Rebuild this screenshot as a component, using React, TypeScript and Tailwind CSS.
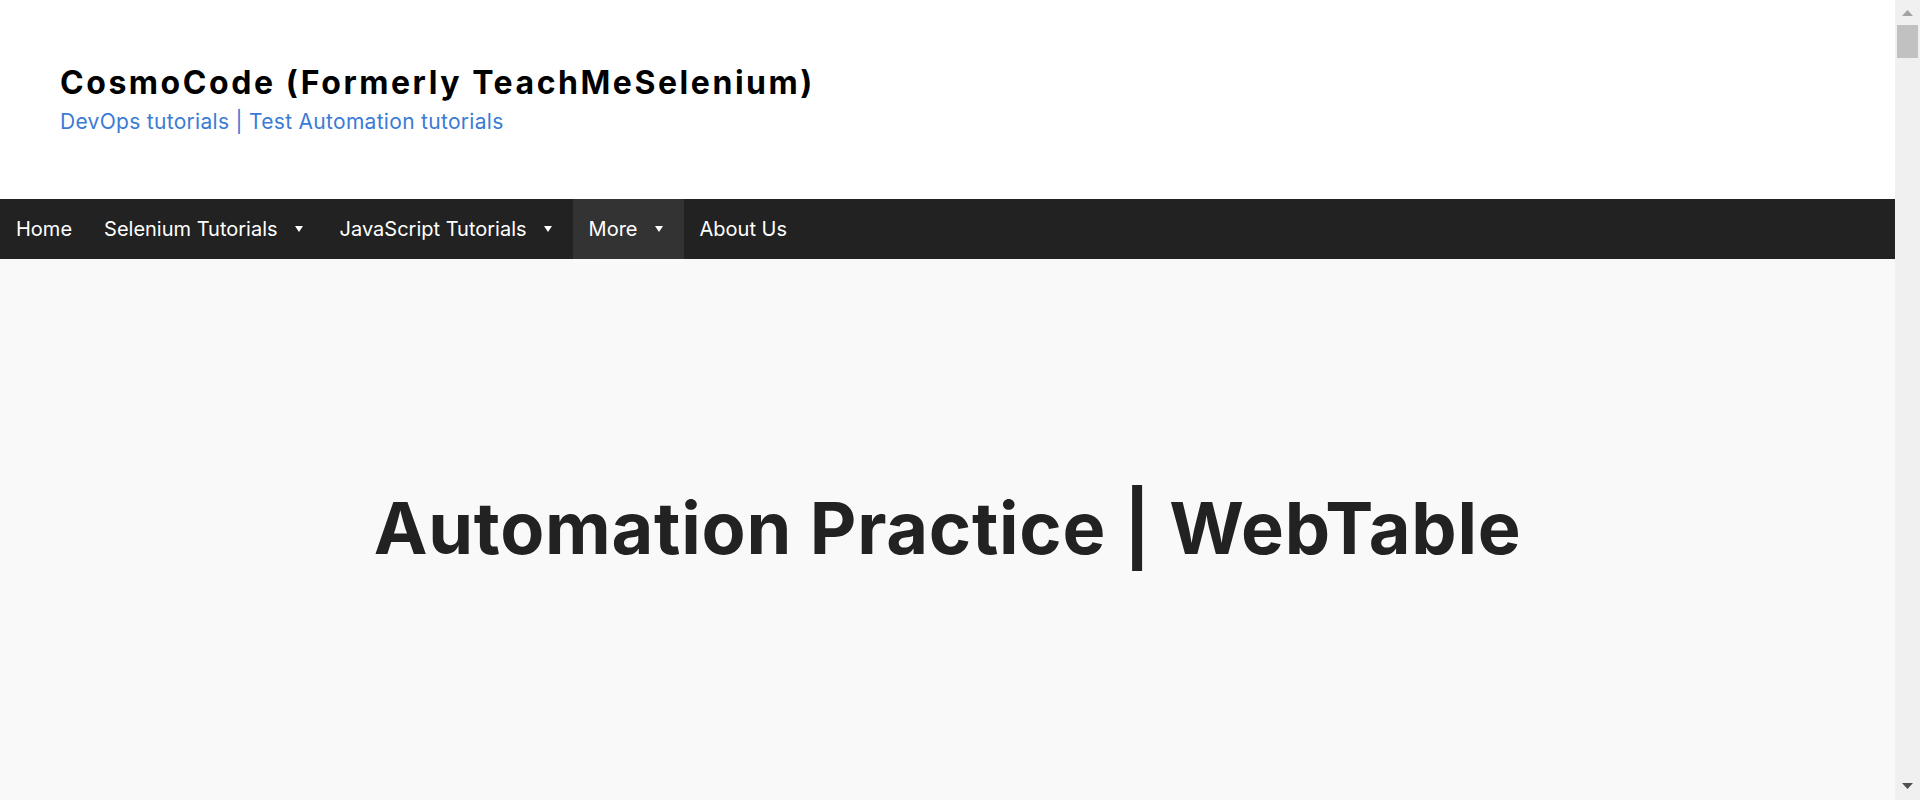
import React from "react";

function Caret() {
  return (
    <svg width="8" height="6" viewBox="0 0 8 6" className="ml-[17px] mr-[21px] shrink-0">
      <path d="M0 0 H8 L4 6 Z" fill="currentColor" />
    </svg>
  );
}

export default function App() {
  return (
    <div className="flex h-[800px] w-full overflow-hidden font-['Inter',sans-serif]">
      <div className="flex min-w-0 flex-1 flex-col">
        <header className="h-[199px] bg-white pl-[60px] pt-[63px]">
          <div className="text-[32px] font-bold leading-[40px] tracking-[2.55px] text-black">
            CosmoCode (Formerly TeachMeSelenium)
          </div>
          <div className="mt-[5px] text-[21px] leading-[28px] tracking-[0.3px] text-[#3a7bd5]">
            DevOps tutorials | Test Automation tutorials
          </div>
        </header>
        <nav className="flex h-[60px] bg-[#222222] text-[20px] leading-[24px] text-white">
          <a className="flex items-center px-4">Home</a>
          <a className="flex items-center pl-4">
            Selenium Tutorials
            <Caret />
          </a>
          <a className="flex items-center pl-4">
            JavaScript Tutorials
            <Caret />
          </a>
          <a className="flex items-center bg-[#333333] pl-4">
            More
            <Caret />
          </a>
          <a className="flex items-center px-4">About Us</a>
        </nav>
        <main className="flex-1 bg-[#f9f9f9]">
          <h1 className="mt-[233px] text-center text-[72px] font-bold leading-none tracking-[0.75px] text-[#222222]">
            Automation Practice | WebTable
          </h1>
        </main>
      </div>
      <div className="flex w-[25px] shrink-0 flex-col bg-[#f0f0f0]">
        <div className="flex h-[25px] justify-center pt-[10px]">
          <svg width="11" height="6" viewBox="0 0 11 6">
            <path d="M0 6 L5.5 0 L11 6 Z" fill="#a3a3a3" />
          </svg>
        </div>
        <div className="mx-[2px] h-[33px] bg-[#c1c1c1]" />
        <div className="flex-1" />
        <div className="flex h-[25px] justify-center pt-[8px]">
          <svg width="11" height="6" viewBox="0 0 11 6">
            <path d="M0 0 L11 0 L5.5 6 Z" fill="#505050" />
          </svg>
        </div>
      </div>
    </div>
  );
}
